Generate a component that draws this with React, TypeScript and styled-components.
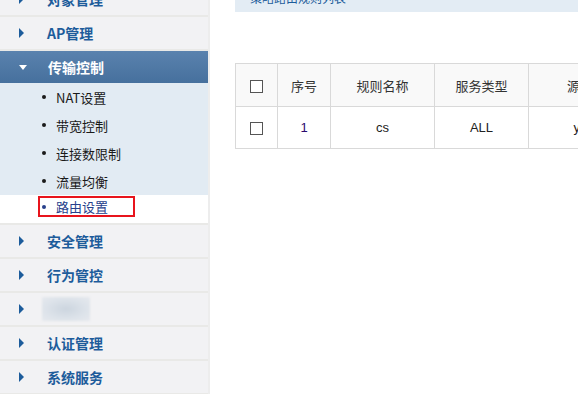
import React from "react";
import styled, { createGlobalStyle } from "styled-components";

const GlobalStyle = createGlobalStyle`
  html, body {
    margin: 0;
    padding: 0;
    background: #fff;
    overflow: hidden;
    font-family: "Noto Sans CJK SC", "Liberation Sans", sans-serif;
  }
`;

// the view is scrolled down a little, as in the original page
const Page = styled.div`
  display: flex;
  width: 578px;
  height: 420px;
  margin-top: -17px;
`;

const Sidebar = styled.div`
  width: 208px;
  flex-shrink: 0;
  border-right: 2px solid #ededed;
  background: #fff;
`;

const MenuRow = styled.div<{ $open?: boolean }>`
  height: 32px;
  display: flex;
  align-items: center;
  padding-left: 19px;
  border-bottom: ${(p) => (p.$open ? "none" : "2px solid #e9e9e7")};
  background: ${(p) =>
    p.$open ? "linear-gradient(#5a82ae, #46709d)" : "#f2f2f4"};
  color: ${(p) => (p.$open ? "#fff" : "#1d5c9b")};
  font-size: 14px;
  font-weight: bold;
`;

const Arrow = styled.span<{ $open?: boolean }>`
  width: 0;
  height: 0;
  margin-right: ${(p) => (p.$open ? "21px" : "23px")};
  ${(p) =>
    p.$open
      ? `border-left: 4px solid transparent; border-right: 4px solid transparent; border-top: 5px solid #fff;`
      : `border-top: 5px solid transparent; border-bottom: 5px solid transparent; border-left: 5px solid #1d5c9b;`}
`;

const SubMenu = styled.div`
  background: #e2ebf3;
  border-bottom: 2px solid #e9e9e7;
`;

const SubItem = styled.div<{ $active?: boolean }>`
  height: 28px;
  display: flex;
  align-items: center;
  padding-left: 38px;
  background: ${(p) => (p.$active ? "#fff" : "transparent")};
  font-size: 13px;
  color: ${(p) => (p.$active ? "#27408b" : "#1a1a1a")};
`;

const SubLabel = styled.span<{ $marked?: boolean }>`
  display: flex;
  align-items: center;
  height: 17px;
  width: ${(p) => (p.$marked ? "93px" : "auto")};
  border: 2px solid ${(p) => (p.$marked ? "#e8141c" : "transparent")};
  align-self: ${(p) => (p.$marked ? "flex-start" : "center")};
  margin-top: ${(p) => (p.$marked ? "1px" : "0")};
  &::before {
    content: "";
    width: 4px;
    height: 4px;
    border-radius: 50%;
    background: currentColor;
    margin: 0 10px 0 2px;
  }
`;

const Blurred = styled.span`
  width: 48px;
  height: 24px;
  margin-left: -5px;
  background: radial-gradient(ellipse at center, #ccd5df 0%, #dde3ea 60%, #e6e9ee 100%);
  filter: blur(1px);
`;

const Content = styled.div`
  flex: 1;
  padding-left: 25px;
  min-width: 0;
`;

const TitleBar = styled.div`
  height: 29px;
  background: #e3ecf4;
  display: flex;
  align-items: center;
  padding-left: 15px;
  font-size: 12px;
  color: #1d5c9b;
`;

const Table = styled.table`
  margin-top: 51px;
  border-collapse: collapse;
  table-layout: fixed;
  width: 404px;
  font-size: 13px;
  color: #333;
`;

const Th = styled.th<{ $w: number }>`
  width: ${(p) => p.$w}px;
  height: 42px;
  border: 1px solid #d9d9d9;
  background: #f9f9f9;
  font-weight: normal;
  text-align: center;
  padding: 0;
  white-space: nowrap;
`;

const Td = styled.td<{ $link?: boolean }>`
  height: 41px;
  border: 1px solid #d9d9d9;
  text-align: center;
  padding: 0;
  white-space: nowrap;
  color: ${(p) => (p.$link ? "#2a0a6e" : "#222")};
  font-family: "Liberation Sans", "Noto Sans CJK SC", sans-serif;
`;

const Check = styled.span`
  display: inline-block;
  width: 11px;
  height: 11px;
  border: 1px solid #555;
  background: #fff;
  vertical-align: middle;
`;

const menusTop = ["对象管理", "AP管理"];
const subs = ["NAT设置", "带宽控制", "连接数限制", "流量均衡"];
const menusBottom = ["安全管理", "行为管控", "", "认证管理", "系统服务"];

export default function App() {
  return (
    <>
      <GlobalStyle />
      <Page>
        <Sidebar>
          {menusTop.map((m) => (
            <MenuRow key={m}>
              <Arrow />
              {m}
            </MenuRow>
          ))}
          <MenuRow $open>
            <Arrow $open />
            传输控制
          </MenuRow>
          <SubMenu>
            {subs.map((s) => (
              <SubItem key={s}>
                <SubLabel>{s}</SubLabel>
              </SubItem>
            ))}
            <SubItem $active>
              <SubLabel $marked>路由设置</SubLabel>
            </SubItem>
          </SubMenu>
          {menusBottom.map((m, i) => (
            <MenuRow key={i}>
              <Arrow />
              {m || <Blurred />}
            </MenuRow>
          ))}
        </Sidebar>
        <Content>
          <TitleBar>策略路由规则列表</TitleBar>
          <Table>
            <thead>
              <tr>
                <Th $w={41}><Check /></Th>
                <Th $w={52}>序号</Th>
                <Th $w={103}>规则名称</Th>
                <Th $w={93}>服务类型</Th>
                <Th $w={115}>源地址</Th>
              </tr>
            </thead>
            <tbody>
              <tr>
                <Td><Check /></Td>
                <Td $link>1</Td>
                <Td>cs</Td>
                <Td>ALL</Td>
                <Td>yyyy</Td>
              </tr>
            </tbody>
          </Table>
        </Content>
      </Page>
    </>
  );
}
